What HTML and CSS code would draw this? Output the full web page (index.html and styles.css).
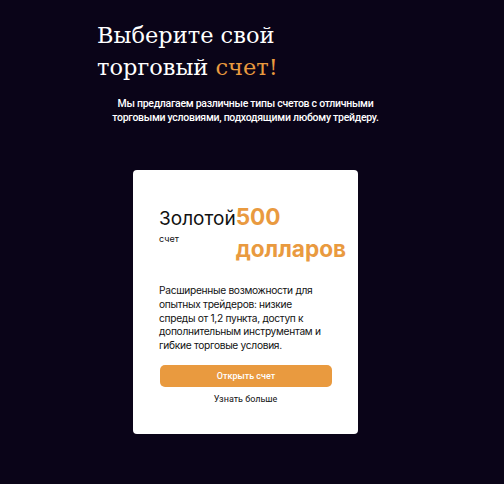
FILE: index.html
```html
<!DOCTYPE html>
<html lang="ru">
<head>
<meta charset="utf-8">
<link rel="stylesheet" href="styles.css">
</head>
<body>
<main class="page">
  <header class="hero">
    <h1 class="title">Выберите свой<br>торговый <span class="accent">счет!</span></h1>
    <p class="lead">Мы предлагаем различные типы счетов с отличными<br>торговыми условиями, подходящими любому трейдеру.</p>
  </header>
  <section class="card">
    <div class="card-head">
      <div class="name">
        <div class="name-main">Золотой</div>
        <div class="name-sub">счет</div>
      </div>
      <div class="price">500 долларов</div>
    </div>
    <p class="desc">Расширенные возможности для опытных трейдеров: низкие спреды от 1,2 пункта, доступ к дополнительным инструментам и гибкие торговые условия.</p>
    <a class="btn">Открыть счет</a>
    <a class="more">Узнать больше</a>
  </section>
</main>
</body>
</html>
```
FILE: styles.css
```css
html, body {
  margin: 0;
  padding: 0;
  background: #0a0418;
}
body {
  font-family: Inter, "Noto Sans", sans-serif;
  color: #fff;
}
.page {
  width: 491px;
  display: flex;
  flex-direction: column;
  align-items: center;
}
.hero {
  width: 100%;
  display: flex;
  flex-direction: column;
  align-items: center;
}
.title {
  align-self: flex-start;
  margin: 19px 0 0 97px;
  font-family: "DejaVu Serif", serif;
  font-weight: normal;
  font-size: 22.5px;
  line-height: 32px;
  color: #fff;
}
.accent { color: #e99a3f; }
.lead {
  margin: 14px 0 0;
  font-family: Roboto, sans-serif;
  font-weight: 500;
  font-size: 10.5px;
  letter-spacing: -0.28px;
  line-height: 14px;
  text-align: center;
}
.card {
  margin-top: 45px;
  width: 225px;
  height: 264px;
  box-sizing: border-box;
  background: #fff;
  border-radius: 4px;
  padding: 37px 26px 0 26px;
  color: #111;
  display: flex;
  flex-direction: column;
}
.card-head {
  display: flex;
  align-items: flex-start;
}
.name-main {
  font-size: 19px;
  line-height: 24px;
}
.name-sub {
  font-size: 9px;
  line-height: 12px;
  margin-top: 2px;
}
.price {
  font-size: 22.6px;
  font-weight: 700;
  line-height: 32px;
  margin-top: -6px;
  color: #e99a3f;
  width: 120px;
  flex-shrink: 0;
}
.desc {
  margin: 19px 0 0;
  width: 168px;
  font-size: 10.2px;
  letter-spacing: -0.3px;
  line-height: 13.8px;
}
.btn {
  margin-top: 12px;
  margin-left: 1px;
  height: 22px;
  border-radius: 5px;
  background: #e99a3f;
  color: #fff;
  font-family: Roboto, sans-serif;
  font-weight: 500;
  font-size: 9px;
  display: flex;
  align-items: center;
  justify-content: center;
}
.more {
  margin-top: 7px;
  text-align: center;
  font-family: Roboto, sans-serif;
  font-size: 9px;
  color: #111;
}
```
